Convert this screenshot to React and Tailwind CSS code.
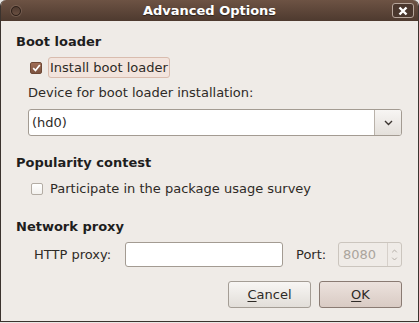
const font = { fontFamily: '"DejaVu Sans", "Liberation Sans", sans-serif' };

function Chevron({ className }) {
  return (
    <svg width="9" height="6" viewBox="0 0 9 6" className={className}>
      <path d="M1 1 L4.5 4.5 L8 1" fill="none" stroke="currentColor" strokeWidth="1.4" />
    </svg>
  );
}

function CheckBox({ checked }) {
  return checked ? (
    <span className="flex h-[12px] w-[12px] items-center justify-center rounded-[2px] border border-[#6e4836] bg-gradient-to-b from-[#a06c55] to-[#7d5340]">
      <svg width="9" height="8" viewBox="0 0 9 8">
        <path d="M1.2 4.2 L3.5 6.5 L7.8 1" fill="none" stroke="#fff" strokeWidth="1.7" />
      </svg>
    </span>
  ) : (
    <span className="h-[12px] w-[12px] rounded-[2px] border border-[#b3aca4] bg-gradient-to-b from-white to-[#f3f1ee]" />
  );
}

function Heading({ children }) {
  return <div className="h-[16px] text-[13px] font-bold leading-[16px] text-[#1e1e1e]">{children}</div>;
}

function Button({ children, primary }) {
  return (
    <button
      className={
        'flex h-[27px] w-[83px] items-center justify-center rounded-[3px] border text-[13px] text-[#2e2a26] ' +
        (primary
          ? 'border-[#8a7b73] bg-gradient-to-b from-[#ece2dd] to-[#d9cbc4]'
          : 'border-[#a49d95] bg-gradient-to-b from-[#f8f6f4] to-[#e2ded9]')
      }
    >
      {children}
    </button>
  );
}

export default function App() {
  return (
    <div className="h-[323px] w-[419px] bg-[#e9e7e4]" style={font}>
      <div className="flex h-[322px] flex-col overflow-hidden rounded-t-[6px] border-x border-b border-[#3b332e] bg-[#efebe7]">
        {/* title bar */}
        <div className="grid h-[21px] shrink-0 grid-cols-[1fr_auto_1fr] items-center bg-gradient-to-b from-[#6d5344] to-[#4e3a2f]">
          <div className="flex pl-[10px]">
            <span className="h-[10px] w-[10px] rounded-full border border-[#2e211a] bg-gradient-to-b from-[#4f3a2f] to-[#6a5042] shadow-[0_0_0_1px_rgba(160,135,120,0.35)]" />
          </div>
          <div className="text-[13px] font-bold leading-[16px] text-white [text-shadow:0_1px_1px_rgba(0,0,0,0.5)]">
            Advanced Options
          </div>
          <div className="flex justify-end pr-[4px]">
            <span className="flex h-[15px] w-[22px] items-center justify-center rounded-[3px] border border-[#b7a69b] bg-[#4a372d]">
              <svg width="10" height="10" viewBox="0 0 10 10">
                <path d="M1.5 1.5 L8.5 8.5 M8.5 1.5 L1.5 8.5" stroke="#fff" strokeWidth="2.4" />
              </svg>
            </span>
          </div>
        </div>

        {/* body */}
        <div className="flex flex-col pl-[15px] pr-[16px] pt-[13px] text-[13px] text-[#2e2a26]">
          <Heading>Boot loader</Heading>

          <div className="mt-[7px] flex h-[21px] items-center pl-[14px]">
            <CheckBox checked />
            <span className="ml-[6px] flex h-[21px] items-center rounded-[3px] border border-[#d9bcae] bg-[#f2e4dd] px-[1px] leading-[16px]">
              Install boot loader
            </span>
          </div>

          <div className="mt-[7px] h-[16px] pl-[12px] leading-[16px]">Device for boot loader installation:</div>

          <div className="ml-[12px] mt-[8px] flex h-[27px] rounded-[3px] border border-[#a39b92] bg-white">
            <div className="flex flex-1 items-center pl-[3px] leading-[16px]">(hd0)</div>
            <div className="flex w-[27px] items-center justify-center rounded-r-[2px] border-l border-[#b9b2aa] bg-gradient-to-b from-[#f7f5f3] to-[#e4e0db] text-[#3c3631]">
              <Chevron />
            </div>
          </div>

          <div className="mt-[19px]">
            <Heading>Popularity contest</Heading>
          </div>

          <div className="mt-[7px] flex h-[21px] items-center pl-[15px]">
            <CheckBox />
            <span className="ml-[7px] leading-[16px]">Participate in the package usage survey</span>
          </div>

          <div className="mt-[20px]">
            <Heading>Network proxy</Heading>
          </div>

          <div className="mt-[7px] flex h-[25px] items-center">
            <span className="w-[109px] pl-[18px] leading-[16px]">HTTP proxy:</span>
            <div className="h-[25px] w-[158px] rounded-[3px] border border-[#a39b92] bg-white" />
            <span className="ml-[13px] w-[42px] leading-[16px]">Port:</span>
            <div className="flex h-[25px] flex-1 rounded-[3px] border border-[#cbc5be] bg-[#efebe7]">
              <div className="flex flex-1 items-center pl-[4px] leading-[16px] text-[#aaa49c]">8080</div>
              <div className="flex w-[14px] flex-col items-center justify-center gap-[4px] border-l border-[#d6d0ca] text-[#b0aaa3]">
                <Chevron className="h-[4px] w-[7px] rotate-180" />
                <Chevron className="h-[4px] w-[7px]" />
              </div>
            </div>
          </div>

          <div className="mt-[14px] flex justify-end gap-[8px]">
            <Button>
              <span className="underline underline-offset-2">C</span>ancel
            </Button>
            <Button primary>
              <span className="underline underline-offset-2">O</span>K
            </Button>
          </div>
        </div>
      </div>
    </div>
  );
}
